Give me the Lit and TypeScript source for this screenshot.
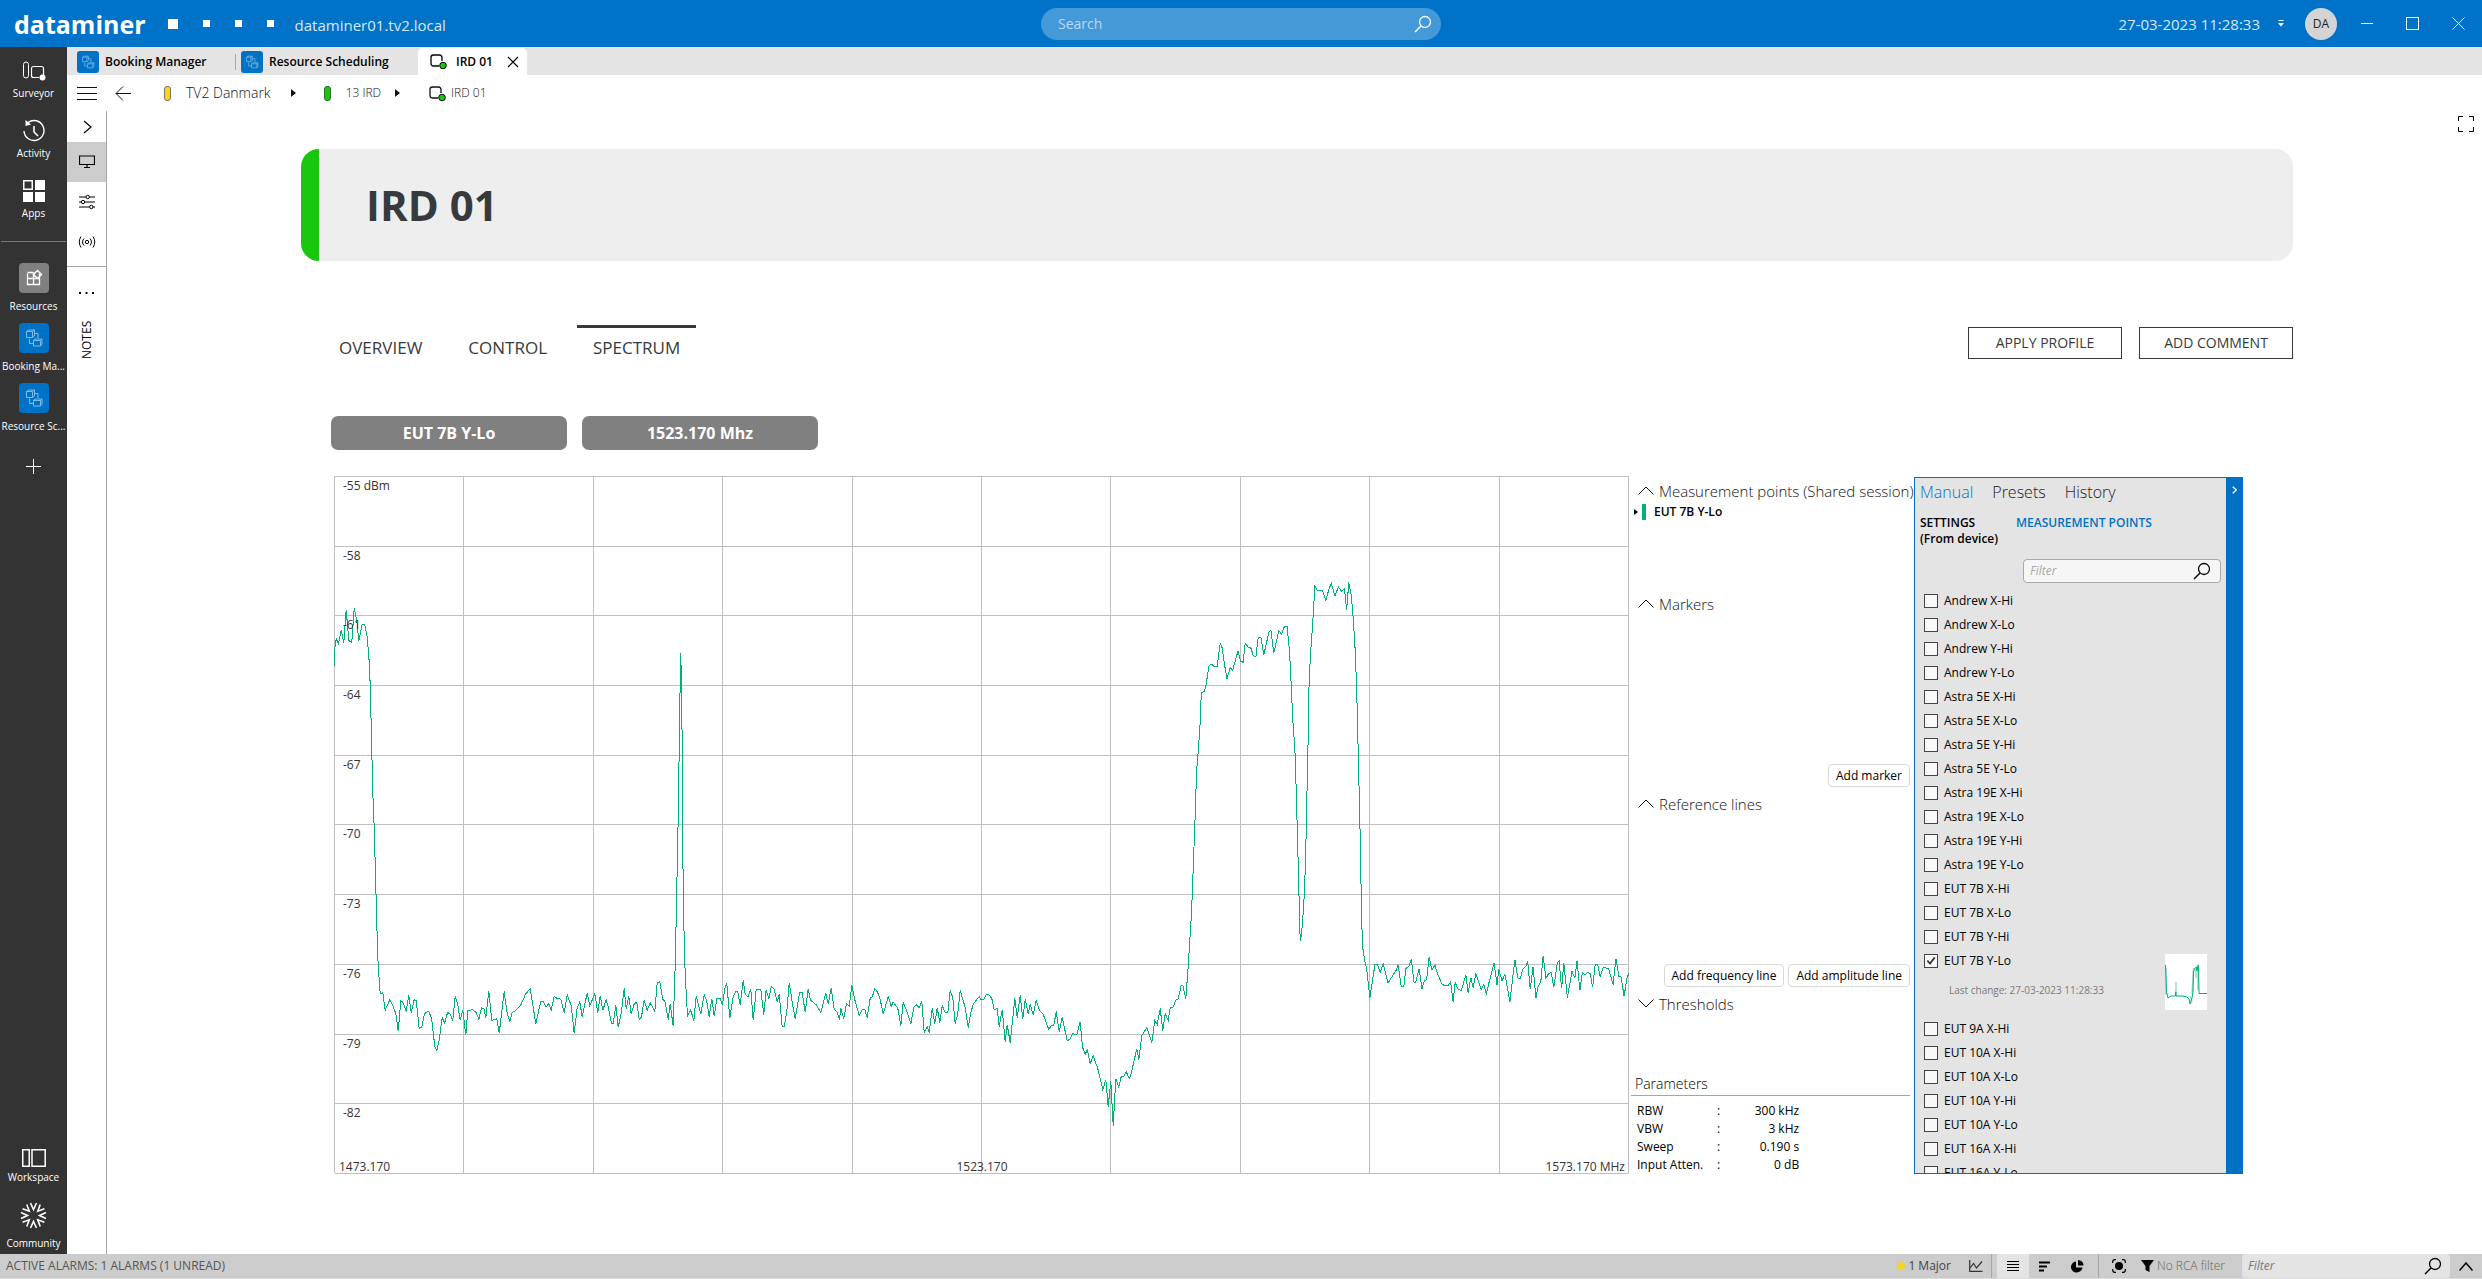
import { LitElement, html, css, svg, nothing } from "lit";
import { customElement, property, state } from "lit/decorators.js";
import { classMap } from "lit/directives/class-map.js";

/* ---------- data ---------- */

interface Sweep {
  origin: [number, number];
  scale: [number, number];
  points: string;
}

/* The trace is stored in three sweeps, each with its own resolution. */
const SWEEPS: Sweep[] = [
  {
    origin: [-15, -17],
    scale: [3, 2.178],
    points: `44,450 46,410 50,390 57,401 65,370 73,398 80,327 88,394 97,398 104,324 112,350 118,394 128,358 136,360 143,385
      149,440 152,490 155,580 158,670 161,750 164,800 167,880 170,960 173,1040 176,1100 182,1162 190,1160 197,1198 211,1175
      220,1188 229,1205 236,1243 244,1178 250,1180 260,1200 268,1165 275,1203 284,1175 290,1177 299,1237 307,1234 315,1205
      327,1200 336,1214 346,1276 352,1286 359,1262 368,1214 376,1226 384,1203 391,1205 400,1220 407,1168 414,1182 422,1220
      430,1198 439,1252 445,1198 460,1197 470,1203 478,1218 486,1192 494,1196 499,1214 508,1157 517,1220 532,1216 539,1248
      554,1157 562,1200 571,1224 578,1202 585,1200 603,1188 618,1163 632,1151 649,1227 664,1178 670,1178 680,1190 688,1184
      695,1198 704,1167 712,1172 724,1174 734,1204 743,1164 755,1188 764,1248 773,1192 781,1180 788,1212 803,1160 811,1188
      826,1162 835,1203 842,1166 850,1198 860,1175 866,1190 876,1226 881,1226 889,1187 896,1235 905,1205 914,1150 920,1196
      928,1168 935,1206 944,1184 952,1180 959,1218 966,1212 974,1175 983,1198 992,1182 1006,1200 1013,1139 1021,1136
      1030,1174 1037,1180 1046,1218 1052,1184 1061,1233 1067,1100 1070,1000 1073,890 1076,780 1079,630 1081,530 1084,421
      1087,540 1089,700 1091,960 1094,1040 1097,1120 1104,1211 1114,1197 1123,1222 1130,1166 1144,1206 1154,1164 1162,1178
      1169,1213 1177,1173 1184,1210 1192,1173 1202,1172 1209,1186 1216,1150 1222,1140 1231,1215 1240,1172 1248,1157
      1255,1158 1262,1187 1271,1133 1277,1164 1286,1168 1294,1151 1301,1220 1310,1153 1324,1153 1333,1207 1340,1153
      1348,1174 1355,1147 1363,1150 1373,1180 1379,1163 1388,1234 1394,1233 1402,1200 1409,1138 1418,1180 1427,1217
      1440,1160 1448,1160 1457,1202 1466,1151 1473,1176 1490,1186 1504,1203 1519,1161 1526,1184 1535,1150 1544,1196
      1552,1201 1560,1218`,
  },
  {
    origin: [505, 303],
    scale: [3, 3],
    points: `4,685 13,715 21,670 29,678 37,616 45,655 59,706 68,688 76,688 83,712 92,654 98,650 106,626 113,634 121,652
      131,702 146,649 155,678 161,665 175,684 184,736 191,667 200,688 214,730 223,682 230,673 239,682 247,664 254,757
      263,739 269,757 278,685 286,730 293,683 301,727 308,676 317,697 325,697 332,631 340,652 347,730 355,700 362,631
      377,682 386,742 394,697 402,670 419,649 424,658 433,658 440,643 449,644 457,655 464,688 473,685 479,739 488,688
      497,784 503,733 512,787 526,655 533,712 542,646 550,715 557,658 566,700 572,673 581,703 590,661 600,690 611,702
      628,748 635,736 643,736 650,694 659,754 668,712 683,781 690,778 700,760 712,763 722,724 729,800 737,823 743,808
      752,850 761,826 775,865 790,928 799,898 806,979 814,901 821,1036 829,895 838,921 845,889 853,889 860,874 869,895
      875,880 892,805 898,838 907,766 922,742 937,787 946,721 953,733 962,685 970,751 977,700 986,721 992,682 1000,682
      1010,658 1016,656 1025,616 1030,616 1039,655 1046,560 1051,480 1056,400 1060,300 1065,160 1069,60 1070,0`,
  },
  {
    origin: [765, 83],
    scale: [2.8, 2.529],
    points: `272,535 277,480 282,410 285,335 293,334 298,318 307,267 314,264 322,271 329,271 338,212 343,222 350,265
      357,301 366,273 373,279 388,230 395,257 402,259 408,211 416,221 423,221 431,243 438,246 444,198 452,196 460,241
      474,184 480,178 488,236 502,179 510,189 518,168 525,168 532,230 537,320 541,400 547,480 551,590 555,720 558,830
      562,962 566,945 572,870 577,760 580,630 584,460 587,310 591,235 597,160 603,67 611,79 624,78 634,104 642,75 649,60
      659,92 669,69 677,80 686,73 692,128 698,58 704,85 709,130 715,215 720,320 723,430 727,580 730,700 733,860 736,975
      744,1020 748,1032 757,1106 771,1023 778,1022 786,1042 794,1020 808,1069 832,1035 836,1024 845,1078 852,1078
      858,1032 866,1028 873,1008 881,1069 886,1066 895,1033 903,1084 909,1065 916,1060 923,1005 931,1036 939,1024
      946,1045 960,1074 976,1075 983,1067 990,1116 996,1068 1003,1084 1013,1088 1026,1049 1032,1093 1040,1056 1046,1081
      1054,1046 1069,1086 1076,1073 1083,1098 1090,1070 1105,1018 1113,1074 1118,1035 1127,1064 1135,1047 1149,1116
      1163,1010 1171,1056 1178,1058 1186,1033 1193,1028 1199,1015 1206,1085 1214,1028 1222,1108 1228,1078 1236,1064
      1242,1001 1250,1058 1257,1046 1265,1043 1272,1080 1282,1018 1287,1014 1294,1083 1300,1020 1310,1106 1323,1040
      1331,1056 1337,1014 1345,1088 1352,1042 1360,1049 1367,1042 1374,1046 1381,1080 1388,1023 1395,1023 1402,1053
      1410,1030 1425,1032 1438,1073 1446,1008 1455,1054 1460,1052 1469,1103 1477,1056 1483,1044`,
  },
];

const TRACE = SWEEPS.flatMap(({ origin, scale, points }) =>
  points
    .trim()
    .split(/\s+/)
    .map((pair) => {
      const [x, y] = pair.split(",").map(Number);
      return `${(x / scale[0] + origin[0]).toFixed(1)},${(y / scale[1] + origin[1]).toFixed(1)}`;
    }),
).join(" ");

const LEVELS = ["-55 dBm", "-58", "-61", "-64", "-67", "-70", "-73", "-76", "-79", "-82"];

const POINTS = [
  "Andrew X-Hi", "Andrew X-Lo", "Andrew Y-Hi", "Andrew Y-Lo",
  "Astra 5E X-Hi", "Astra 5E X-Lo", "Astra 5E Y-Hi", "Astra 5E Y-Lo",
  "Astra 19E X-Hi", "Astra 19E X-Lo", "Astra 19E Y-Hi", "Astra 19E Y-Lo",
  "EUT 7B X-Hi", "EUT 7B X-Lo", "EUT 7B Y-Hi", "EUT 7B Y-Lo",
  "EUT 9A X-Hi", "EUT 10A X-Hi", "EUT 10A X-Lo", "EUT 10A Y-Hi",
  "EUT 10A Y-Lo", "EUT 16A X-Hi", "EUT 16A Y-Lo",
];

const PARAMETERS = [
  ["RBW", "300 kHz"],
  ["VBW", "3 kHz"],
  ["Sweep", "0.190 s"],
  ["Input Atten.", "0 dB"],
];

/* ---------- icons ---------- */

const icon = (w: number, h: number, body: unknown) =>
  html`<svg class="icon" width=${w} height=${h} viewBox="0 0 ${w} ${h}" fill="none" stroke="currentColor" aria-hidden="true">${body}</svg>`;

const searchIcon = icon(18, 18, svg`<circle cx="11" cy="7" r="5.500" stroke-width="1.300"/><path d="M7 11L1 17" stroke-width="1.400"/>`);
const surveyorIcon = icon(24, 22, svg`<rect x="1.5" y="2" width="5" height="16" rx="2.5"/><path d="M17 17.5h-5.5a2 2 0 0 1-2-2v-7a2 2 0 0 1 2-2h8a2 2 0 0 1 2 2V15" stroke-width="1.2"/><circle cx="20.5" cy="17.5" r="3" fill="currentColor" stroke="none"/>`);
const activityIcon = icon(24, 24, svg`<path d="M6 3.5A10 10 0 1 1 2 12" stroke-width="1.4"/><path d="M12 7v6l4 4" stroke-width="1.6"/><path d="M3.5 1L9 5.500L3.500 7z" fill="currentColor" stroke="none"/>`);
const appsIcon = icon(22, 22, svg`<rect x=".75" y=".75" width="8.500" height="8.500" stroke-width="1.500"/><path d="M12 0h10v10H12zM0 12h10v10H0zM12 12h10v10H12z" fill="currentColor" stroke="none"/>`);
const resourcesIcon = icon(30, 30, svg`<path d="M8.500 10.500v11h12v-11M8.500 9.500h6M8.500 15.500h12M14.500 9.500v12" stroke-width="1.3"/><path d="M18.500 7.500l4 4-4 4-4-4z" stroke-width="1.4"/>`);
const bookingIcon = (size: number) =>
  html`<svg class="icon" width=${size} height=${size} viewBox="0 0 30 30" fill="none" stroke="#7fb9e6" aria-hidden="true">
    <rect width="30" height="30" rx="4" fill="#0072c6" stroke="none"/>
    <path d="M7.500 8.500h6v6h-6zM7.500 8.500l2-1.500h6l-2 1.500M15.500 7v6l-2 1.500M14.500 17.500h7v5.500h-7zM14.500 17.500l1.500-1.500h7l-1.500 1.500M23 16v5.500L21.500 23M15.500 10.500h3.500v4.500M10.500 15.500v5h4" />
  </svg>`;
const plusIcon = icon(15, 15, svg`<path d="M7.500 0v15M0 7.500h15"/>`);
const workspaceIcon = icon(24, 18, svg`<rect x=".75" y=".75" width="6.500" height="16.500" stroke-width="1.500"/><rect x="10" y=".75" width="13.200" height="16.500" stroke-width="1.500"/>`);
const communityIcon = html`<svg class="icon" width="27" height="27" viewBox="-13.500 -13.500 27 27" fill="none" stroke="currentColor" stroke-width="1.600" aria-hidden="true">
  ${[0, 45, 90, 135, 180, 225, 270, 315].map((a) => svg`<path d="M-3 -12.500L0 -6L3 -12.500" transform="rotate(${a})"/>`)}
</svg>`;
const elementIcon = icon(17, 17, svg`<path d="M9 13H3.500A2.500 2.500 0 0 1 1 10.500v-6A2.500 2.500 0 0 1 3.500 2h6A2.500 2.500 0 0 1 12 4.500V8" stroke-width="1.300"/><circle cx="13" cy="12.500" r="3.300" fill="#17c60d"/>`);
const closeIcon = icon(12, 12, svg`<path d="M1 1l10 10M11 1L1 11" stroke-width="1.200"/>`);
const menuIcon = icon(20, 13, svg`<path d="M0 .5h20M0 6.500h20M0 12.500h20"/>`);
const backIcon = icon(17, 15, svg`<path d="M16 7.500H1M8 .5L1 7.500l7 7"/>`);
const triangle = icon(5, 8, svg`<path d="M0 0l5 4-5 4z" fill="currentColor" stroke="none"/>`);
const chevronRight = icon(9, 14, svg`<path d="M1 1l7 6-7 6" stroke-width="1.200"/>`);
const monitorIcon = icon(16, 13, svg`<path d="M.5 1h15v8.500H.5zM8 9.500V12M5 12.500h6" stroke-width="1.200"/>`);
const slidersIcon = icon(16, 16, svg`<path d="M0 3h7M10.500 3H16M0 8h2.500M5.500 8H16M0 13h10.500M14 13h2"/><circle cx="8.700" cy="3" r="1.700"/><circle cx="4" cy="8" r="1.700"/><circle cx="12.300" cy="13" r="1.700"/>`);
const antennaIcon = icon(18, 12, svg`<circle cx="9" cy="6" r="1.700"/><path d="M6 2.500a5 5 0 0 0 0 7M12 2.500a5 5 0 0 1 0 7M3 .5Q-.5 6 3 11.500M15 .5q3.500 5.500 0 11"/>`);
const dotsIcon = icon(15, 3, svg`<path d="M0 0h2v2H0zM6.500 0h2v2h-2zM13 0h2v2h-2z" fill="currentColor" stroke="none"/>`);
const fullscreenIcon = icon(16, 16, svg`<path d="M.5 5V.5H5M11 .5h4.500V5M15.500 11v4.500H11M5 15.500H.5V11"/>`);
const caretUp = icon(16, 9, svg`<path d="M.5 8.500L8 1l7.500 7.500"/>`);
const caretDown = icon(16, 9, svg`<path d="M.5 .5L8 8l7.500-7.500"/>`);
const pinIcon = icon(6, 7, svg`<path d="M.5 .5h5" /><path d="M0 3h6L3 6.500z" fill="currentColor" stroke="none"/>`);
const trendIcon = icon(14, 12, svg`<path d="M.7 0v11.300H13.500M1 8l3.500-4.500L7.500 8 13 1.500" stroke-width="1.200"/>`);
const linesIcon = icon(12, 10, svg`<path d="M0 .5h12M0 3.500h12M0 6.500h12M0 9.500h12"/>`);
const barsIcon = icon(11, 11, svg`<path d="M0 1.500h11M0 5.500h8M0 9.500h5" stroke-width="2"/>`);
const pieIcon = icon(14, 13, svg`<path d="M6 1.500V7.500h6.500A5.800 5.500 0 1 1 6 1.500z" fill="currentColor" stroke="none"/><path d="M8 0a5.500 5.500 0 0 1 5.500 5.500H8z" fill="currentColor" stroke="none"/>`);
const targetIcon = icon(14, 14, svg`<circle cx="7" cy="7" r="4" fill="currentColor" stroke="none"/><path d="M.7 4V2.700a2 2 0 0 1 2-2H4M10 .7h1.300a2 2 0 0 1 2 2V4M13.300 10v1.300a2 2 0 0 1-2 2H10M4 13.300H2.700a2 2 0 0 1-2-2V10" stroke-width="1.200"/>`);
const funnelIcon = icon(13, 12, svg`<path d="M0 0h13L8.500 6v6l-4-2V6z" fill="currentColor" stroke="none"/>`);

/* ---------- shared styles ---------- */

const base = css`
  * { box-sizing: border-box; }
  button { font: inherit; color: inherit; background: none; border: 0; padding: 0; margin: 0; cursor: pointer; }
  a { color: inherit; text-decoration: none; }
  h1, h2, ul { margin: 0; padding: 0; font-weight: inherit; list-style: none; }
  .icon { display: block; flex: none; }
`;

/* ---------- chart ---------- */

@customElement("spectrum-chart")
export class SpectrumChart extends LitElement {
  static styles = [
    base,
    css`
      :host { display: grid; font: 12px/16px "Open Sans", "Noto Sans", sans-serif; color: #333; min-width: 0; min-height: 0; }
      .plot, .levels, .axis { grid-area: 1 / 1; min-height: 0; }
      .plot { width: 100%; height: 100%; display: block; overflow: visible; }
      .grid { stroke: #bfbfbf; stroke-width: 1; shape-rendering: crispEdges; vector-effect: non-scaling-stroke; }
      .trace { stroke: #00b273; stroke-width: 1; fill: none; shape-rendering: crispEdges; vector-effect: non-scaling-stroke; }
      .levels { display: grid; grid-template-rows: repeat(10, 1fr); padding-left: 8px; }
      .level { padding-top: 1px; }
      .axis { display: grid; grid-template-columns: 1fr auto 1fr; align-items: end; padding: 0 4px; line-height: 14px; }
      .end { text-align: right; }
    `,
  ];

  render() {
    const steps = Array.from({ length: 11 }, (_, i) => i);
    return html`
      <svg class="plot" viewBox="0.5 0.5 1294 696" preserveAspectRatio="none" role="img" aria-label="Spectrum trace">
        ${steps.map((i) => svg`<path class="grid" d="M0 ${i * 69.6}H1294M${i * 129.4} 0V696"/>`)}
        <polyline class="trace" points=${TRACE} />
      </svg>
      <div class="levels">${LEVELS.map((l) => html`<span class="level">${l}</span>`)}</div>
      <div class="axis"><span>1473.170</span><span>1523.170</span><span class="end">1573.170 MHz</span></div>
    `;
  }
}

/* ---------- measurement point list ---------- */

@customElement("measurement-panel")
export class MeasurementPanel extends LitElement {
  @property({ attribute: false }) points: string[] = [];
  @state() private selected = new Set(["EUT 7B Y-Lo"]);

  static styles = [
    base,
    css`
      :host { display: flex; min-height: 0; border: 1px solid #0072c6; background: #e4e4e4; font: 12px/16px "Open Sans", "Noto Sans", sans-serif; color: #000; }
      .body { flex: 1; min-width: 0; min-height: 0; display: flex; flex-direction: column; overflow: hidden; }
      .modes { display: flex; gap: 19px; padding: 2px 5px 0; font-size: 16px; line-height: 24px; font-weight: 300; color: #222; }
      .mode.active { color: #0072c6; }
      .views { display: flex; gap: 18px; padding: 11px 5px 0; font-size: 12px; font-weight: 600; align-items: flex-start; }
      .settings { width: 78px; white-space: nowrap; text-align: left; }
      .points-tab { color: #0072c6; }
      .filter { display: flex; align-items: center; align-self: flex-end; width: 198px; height: 24px; margin: 12px 5px 6px 0; padding: 0 9px 0 6px; border: 1px solid #aaa; border-radius: 4px; background: #f6f6f6; }
      .filter input { flex: 1; min-width: 0; border: 0; outline: 0; background: none; padding: 0; font: italic 12px/16px "Open Sans", sans-serif; color: #000; }
      .filter input::placeholder { color: #a8a8a8; opacity: 1; }
      .list { flex: 1; min-height: 0; overflow: hidden; padding-left: 9px; }
      .row { display: flex; align-items: center; gap: 6px; height: 24px; }
      .box { appearance: none; flex: none; width: 14px; height: 14px; margin: 0; border: 1px solid #444; background: #f8f8f8; display: grid; place-items: center; }
      .box:checked::before { content: ""; width: 9px; height: 8px; background: #333; clip-path: polygon(0 50%, 18% 38%, 38% 65%, 82% 0, 100% 10%, 40% 100%); }
      .detail { display: flex; justify-content: space-between; align-items: flex-start; height: 44px; padding: 9px 19px 0 25px; font-size: 10px; line-height: 16px; color: #7a7a7a; }
      .thumb { display: block; background: #fff; margin-top: -28px; }
      .rail { flex: none; width: 16px; background: #0072c6; color: #fff; display: flex; flex-direction: column; align-items: center; padding-top: 8px; }
    `,
  ];

  private toggle(point: string) {
    const next = new Set(this.selected);
    next.has(point) ? next.delete(point) : next.add(point);
    this.selected = next;
  }

  render() {
    return html`
      <div class="body">
        <div class="modes">
          <button class="mode active">Manual</button><button class="mode">Presets</button><button class="mode">History</button>
        </div>
        <div class="views">
          <button class="settings"><span>SETTINGS<br />(From device)</span></button>
          <button class="points-tab">MEASUREMENT POINTS</button>
        </div>
        <div class="filter"><input type="text" placeholder="Filter" aria-label="Filter measurement points" />${searchIcon}</div>
        <ul class="list">
          ${this.points.map((point, i) => {
            const on = this.selected.has(point);
            return html`<li>
              <div class="row">
                <input class="box" type="checkbox" id="point-${i}" .checked=${on} @change=${() => this.toggle(point)} />
                <label for="point-${i}">${point}</label>
              </div>
              ${on
                ? html`<div class="detail">
                    <span>Last change: 27-03-2023 11:28:33</span>
                    <svg class="thumb" width="42" height="56" viewBox="0 0 42 56" fill="none" aria-hidden="true">
                      <path d="M1 14V41M11 42V28M27 40L28.500 14M31 14V24M33 14V36M25 42L27 48" stroke="#9fdcc3" stroke-width="1.500" />
                      <path d="M.5 11L1.500 38 3 44 6 42H10.500V38H11V42H17L22 43 24 45 25 50 27 44 28 38 28.500 18 30 14 31.500 13 32 17 33 11H33.500L34 39.500H42" stroke="#00b273" />
                    </svg>
                  </div>`
                : nothing}
            </li>`;
          })}
        </ul>
      </div>
      <button class="rail" aria-label="Collapse panel">${icon(5, 8, svg`<path d="M.7 .7L4.300 4 .7 7.300" stroke-width="1.300"/>`)}</button>
    `;
  }
}

/* ---------- application ---------- */

@customElement("app-root")
export class AppRoot extends LitElement {
  @state() private page = "SPECTRUM";

  static styles = [
    base,
    css`
      :host { display: flex; flex-direction: column; height: 100vh; overflow: hidden; background: #fff; color: #000; font: 12px/16px "Open Sans", "Noto Sans", sans-serif; }

      .titlebar { flex: none; display: grid; grid-template-columns: 1fr 400px 1fr; align-items: center; height: 47px; background: #0072c8; color: #fff; }
      .brand { display: flex; align-items: center; padding-left: 14px; }
      .logo { font-size: 25px; line-height: 32px; font-weight: 700; }
      .squares { display: flex; gap: 25px; align-items: center; margin: 0 21px 0 22px; }
      .square { width: 7px; height: 7px; background: #fff; }
      .square.big { width: 10px; height: 10px; }
      .host { font-size: 15px; line-height: 20px; color: #d6e8f6; padding-top: 2px; }
      .search { display: flex; align-items: center; height: 32px; border-radius: 16px; background: #4499d8; padding: 0 9px 0 17px; }
      .search input { flex: 1; min-width: 0; border: 0; outline: 0; padding: 0; background: none; color: #fff; font: 14px/20px "Open Sans", sans-serif; }
      .search input::placeholder { color: #b9daf2; opacity: 1; }
      .session { display: flex; align-items: center; justify-content: flex-end; padding-right: 17px; }
      .clock { font-size: 15px; line-height: 20px; color: #d6e8f6; }
      .pin { margin-left: 18px; }
      .avatar { width: 32px; height: 32px; border-radius: 50%; background: #d4d4d4; color: #222; display: grid; place-items: center; margin: 0 24px 0 21px; }
      .window { display: flex; gap: 33px; align-items: center; }

      .frame { flex: 1; min-height: 0; display: grid; grid-template-columns: 67px 1fr; }
      .side { background: #333; color: #fff; display: flex; flex-direction: column; align-items: center; font-size: 10px; line-height: 14px; min-height: 0; padding: 9px 0 4px; }
      .tools, .apps, .tail { display: flex; flex-direction: column; align-items: center; width: 100%; }
      .tools { gap: 16px; }
      .apps { gap: 10px; }
      .tail { margin-top: auto; gap: 10px; }
      .entry { width: 100%; display: flex; flex-direction: column; align-items: center; }
      .glyph { height: 30px; display: grid; place-items: center; }
      .tail .glyph { height: 24px; }
      .tail .entry:last-child .glyph { height: 42px; }
      .caption { white-space: nowrap; }
      .apps .entry { gap: 6px; }
      .tile { width: 30px; height: 30px; border-radius: 4px; background: #808080; display: block; }
      .rule { width: calc(100% - 2px); height: 1px; background: #777; margin: 21px 0; }
      .add { height: 30px; display: grid; place-items: center; margin-top: 18px; }

      .work { display: flex; flex-direction: column; min-width: 0; min-height: 0; }
      .tabs { flex: none; display: flex; align-items: flex-end; height: 28px; background: #e4e4e4; padding-left: 10px; font-weight: 600; }
      .doc { display: flex; align-items: center; gap: 6px; height: 26px; font-size: 12px; }
      .doc.first { width: 159px; border-right: 1px solid #aaa; height: 16px; margin-bottom: 5px; }
      .doc.second { width: 177px; padding-left: 5px; }
      .doc.open { width: 109px; height: 27px; margin-left: 5px; background: #fff; border-radius: 5px 5px 0 0; padding: 0 8px 0 12px; gap: 9px; }
      .doc.open .close { margin-left: auto; padding: 0; }

      .crumbs { flex: none; display: flex; align-items: center; height: 36px; padding-left: 10px; font-weight: 300; font-size: 12px; color: #111; }
      .back { margin-left: 18px; }
      .pill { width: 7px; height: 15px; border-radius: 3px; border: 1px solid #776; background: #ffd31a; margin: 0 15px 0 32px; }
      .pill.ok { background: #17c60d; border-color: #2b6e28; margin: 0 15px 0 28px; }
      .root { font-size: 14px; line-height: 20px; }
      .crumbs .step { margin-left: 20px; }
      .crumbs .step.last { margin: 0 29px 0 14px; }
      .here { display: flex; gap: 5px; align-items: center; }

      .view { flex: 1; min-height: 0; display: grid; grid-template-columns: 40px 1fr; }
      .pages { border-right: 1px solid #a6a6a6; display: flex; flex-direction: column; align-items: stretch; }
      .pages button { height: 40px; display: grid; place-items: center; }
      .pages .expand { height: 31px; padding-left: 2px; }
      .pages .current { background: #ccc; padding-bottom: 2px; }
      .pages .signal { height: 45px; border-bottom: 1px solid #a6a6a6; padding-bottom: 4px; }
      .pages .more { height: 52px; }
      .pages .notes { height: 42px; writing-mode: vertical-rl; transform: rotate(180deg); font-size: 12px; white-space: nowrap; }

      .content { min-width: 0; min-height: 0; display: flex; flex-direction: column; padding: 5px 8px 80px 194px; }
      .expand-view { align-self: flex-end; flex: none; }
      .banner { flex: none; display: flex; height: 112px; margin: 17px 181px 0 0; border-radius: 18px; overflow: hidden; background: #eee; }
      .health { width: 18px; background: #17c60d; }
      .banner h1 { align-self: center; margin-left: 47px; font-size: 42px; line-height: 56px; font-weight: 700; color: #373a3d; }
      .nav { flex: none; display: flex; justify-content: space-between; margin: 64px 181px 0 37px; }
      .pagetabs { display: flex; gap: 14px; }
      .pagetab { height: 42px; padding: 1px 16px 0; border-top: 3px solid transparent; font-size: 17px; line-height: 24px; color: #373a3d; }
      .pagetab:first-child { padding-left: 1px; }
      .pagetab.active { border-top-color: #35383c; }
      .actions { display: flex; gap: 17px; padding-top: 2px; }
      .action { width: 154px; height: 32px; border: 1px solid #35383c; font-size: 14px; line-height: 20px; color: #373a3d; }
      .chips { flex: none; display: flex; gap: 15px; margin: 49px 0 27px 30px; }
      .chip { width: 236px; height: 34px; border-radius: 7px; background: #808080; color: #fff; font-size: 16px; line-height: 34px; font-weight: 700; text-align: center; }

      .spectrum { flex: 1; min-height: 0; display: grid; grid-template-columns: 1fr 285px 329px; grid-template-rows: minmax(0, 1fr); margin: 0 231px 0 34px; }
      .traces { min-width: 0; min-height: 0; display: grid; grid-template-columns: minmax(0, 1fr); grid-template-rows: 113px 200px 200px 1fr auto; padding: 0 4px 0 2px; }
      .section { display: flex; flex-direction: column; justify-content: space-between; padding-bottom: 3px; }
      .heading { display: flex; align-items: center; gap: 5px; height: 27px; padding-left: 7px; font-size: 15px; font-weight: 300; color: #111; white-space: nowrap; text-align: left; }
      .legend { display: flex; align-items: center; gap: 4px; padding-left: 3px; font-weight: 600; height: 16px; margin-bottom: auto; }
      .legend .swatch { width: 4px; height: 16px; background: #00b273; margin-right: 4px; }
      .commands { display: flex; justify-content: flex-end; gap: 4px; }
      .command { height: 23px; padding: 0 7px; border: 1px solid #d8d8d8; border-radius: 4px; background: #fff; white-space: nowrap; }
      .parameters h2 { font-size: 14px; line-height: 23px; font-weight: 300; padding-left: 4px; border-bottom: 1px solid #a6a6a6; margin-bottom: 6px; }
      .values { border-collapse: collapse; margin-left: 6px; }
      .values th, .values td { padding: 0; height: 18px; line-height: 18px; font-weight: 400; text-align: left; }
      .values th { width: 80px; }
      .values .value { width: 79px; text-align: right; }

      .status { flex: none; display: flex; align-items: center; height: 25px; background: #ccc; color: #555; padding: 0 9px 0 6px; border-bottom: 1px solid #ddd; }
      .alarms { flex: 1; }
      .dot { width: 8px; height: 8px; border-radius: 50%; background: #f5d327; margin-right: 3px; }
      .major { margin-right: 18px; color: #444; }
      .cell { align-self: stretch; width: 32px; display: grid; place-items: center; color: #000; }
      .cell.on { background: #e4e4e4; margin-left: 5px; }
      .cell.pie { margin-right: 5px; }
      .cell.focus { width: 40px; }
      .trend { color: #333; margin-right: 8px; }
      .bar { width: 1px; align-self: stretch; background: #a6a6a6; }
      .rca { display: flex; align-items: center; gap: 3px; color: #666; font-weight: 300; margin: 0 17px 0 2px; }
      .rca .icon { color: #000; }
      .status-filter { display: flex; align-items: center; align-self: stretch; width: 208px; border-radius: 4px; background: #e4e4e4; color: #000; padding: 0 8px 0 6px; margin-right: 9px; }
      .status-filter input { flex: 1; min-width: 0; border: 0; outline: 0; background: none; padding: 0; font: italic 12px/16px "Open Sans", sans-serif; }
      .status-filter input::placeholder { color: #777; opacity: 1; }
      .status .up { color: #000; }
    `,
  ];

  private entry(glyph: unknown, caption: string) {
    return html`<button class="entry"><span class="glyph">${glyph}</span><span class="caption">${caption}</span></button>`;
  }

  private section(title: string, body: unknown, open = true) {
    return html`<section class="section">
      <button class="heading" aria-expanded=${open ? "true" : "false"}>${open ? caretUp : caretDown}<span>${title}</span></button>
      ${body}
    </section>`;
  }

  render() {
    return html`
      <header class="titlebar">
        <div class="brand">
          <span class="logo">dataminer</span>
          <span class="squares">
            <span class="square big"></span><span class="square"></span><span class="square"></span><span class="square"></span>
          </span>
          <span class="host">dataminer01.tv2.local</span>
        </div>
        <div class="search"><input type="text" placeholder="Search" aria-label="Search" />${searchIcon}</div>
        <div class="session">
          <span class="clock">27-03-2023 11:28:33</span>
          <button class="pin" aria-label="Time options">${pinIcon}</button>
          <button class="avatar">DA</button>
          <span class="window">
            <button aria-label="Minimize">${icon(12, 13, svg`<path d="M0 6.500h12"/>`)}</button>
            <button aria-label="Maximize">${icon(13, 13, svg`<rect x=".5" y=".5" width="12" height="12"/>`)}</button>
            <button aria-label="Close window">${icon(13, 13, svg`<path d="M.5 .5l12 12M12.500 .5l-12 12"/>`)}</button>
          </span>
        </div>
      </header>

      <div class="frame">
        <nav class="side" aria-label="Application">
          <div class="tools">
            ${this.entry(surveyorIcon, "Surveyor")} ${this.entry(activityIcon, "Activity")} ${this.entry(appsIcon, "Apps")}
          </div>
          <div class="rule"></div>
          <div class="apps">
            ${this.entry(html`<span class="tile">${resourcesIcon}</span>`, "Resources")}
            ${this.entry(bookingIcon(30), "Booking Ma...")} ${this.entry(bookingIcon(30), "Resource Sc...")}
          </div>
          <button class="add" aria-label="Add app">${plusIcon}</button>
          <div class="tail">${this.entry(workspaceIcon, "Workspace")} ${this.entry(communityIcon, "Community")}</div>
        </nav>

        <div class="work">
          <div class="tabs">
            <button class="doc first">${bookingIcon(22)}<span>Booking Manager</span></button>
            <button class="doc second">${bookingIcon(22)}<span>Resource Scheduling</span></button>
            <div class="doc open">${elementIcon}<span>IRD 01</span><button class="close" aria-label="Close tab">${closeIcon}</button></div>
          </div>
          <nav class="crumbs" aria-label="Breadcrumb">
            <button aria-label="Menu">${menuIcon}</button>
            <button class="back" aria-label="Back">${backIcon}</button>
            <span class="pill"></span><a class="root" href="#tv2">TV2 Danmark</a>
            <span class="step">${triangle}</span>
            <span class="pill ok"></span><a href="#ird">13 IRD</a>
            <span class="step last">${triangle}</span>
            <a class="here" href="#ird-01">${elementIcon}<span>IRD 01</span></a>
          </nav>

          <div class="view">
            <nav class="pages" aria-label="Card pages">
              <button class="expand" aria-label="Expand">${chevronRight}</button>
              <button class="current" aria-label="Visual">${monitorIcon}</button>
              <button aria-label="Data">${slidersIcon}</button>
              <button class="signal" aria-label="Signal">${antennaIcon}</button>
              <button class="more" aria-label="More">${dotsIcon}</button>
              <button class="notes">NOTES</button>
            </nav>

            <main class="content">
              <button class="expand-view" aria-label="Full screen">${fullscreenIcon}</button>
              <div class="banner"><div class="health"></div><h1>IRD 01</h1></div>
              <div class="nav">
                <div class="pagetabs">
                  ${["OVERVIEW", "CONTROL", "SPECTRUM"].map(
                    (name) => html`<button
                      class=${classMap({ pagetab: true, active: name === this.page })}
                      @click=${() => (this.page = name)}
                    >${name}</button>`,
                  )}
                </div>
                <div class="actions"><button class="action">APPLY PROFILE</button><button class="action">ADD COMMENT</button></div>
              </div>
              <div class="chips"><div class="chip">EUT 7B Y-Lo</div><div class="chip">1523.170 Mhz</div></div>

              <div class="spectrum">
                <spectrum-chart></spectrum-chart>
                <div class="traces">
                  ${this.section(
                    "Measurement points (Shared session)",
                    html`<div class="legend">${icon(4, 6, svg`<path d="M0 0l4 3-4 3z" fill="currentColor" stroke="none"/>`)}<span class="swatch"></span><span>EUT 7B Y-Lo</span></div>`,
                  )}
                  ${this.section("Markers", html`<div class="commands"><button class="command">Add marker</button></div>`)}
                  ${this.section(
                    "Reference lines",
                    html`<div class="commands"><button class="command">Add frequency line</button><button class="command">Add amplitude line</button></div>`,
                  )}
                  ${this.section("Thresholds", nothing, false)}
                  <div class="parameters">
                    <h2>Parameters</h2>
                    <table class="values">
                      ${PARAMETERS.map(([name, value]) => html`<tr><th scope="row">${name}</th><td>:</td><td class="value">${value}</td></tr>`)}
                    </table>
                  </div>
                </div>
                <measurement-panel .points=${POINTS}></measurement-panel>
              </div>
            </main>
          </div>
        </div>
      </div>

      <footer class="status">
        <span class="alarms">ACTIVE ALARMS: 1 ALARMS (1 UNREAD)</span>
        <span class="dot"></span><span class="major">1 Major</span>
        <button class="trend" aria-label="Trend">${trendIcon}</button>
        <span class="bar"></span>
        <button class="cell on" aria-label="List">${linesIcon}</button>
        <button class="cell" aria-label="Severity">${barsIcon}</button>
        <button class="cell pie" aria-label="Distribution">${pieIcon}</button>
        <span class="bar"></span>
        <button class="cell focus" aria-label="Focus">${targetIcon}</button>
        <button class="rca">${funnelIcon}<span>No RCA filter</span></button>
        <div class="status-filter"><input type="text" placeholder="Filter" aria-label="Filter alarms" />${searchIcon}</div>
        <button class="up" aria-label="Open alarm console">${icon(14, 9, svg`<path d="M.5 8.500L7 1l6.500 7.500" stroke-width="1.500"/>`)}</button>
      </footer>
    `;
  }
}
